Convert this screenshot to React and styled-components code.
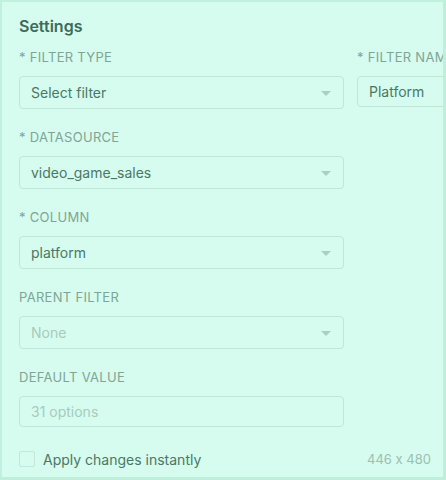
import React from 'react'
import styled, { createGlobalStyle } from 'styled-components'

const GlobalStyle = createGlobalStyle`
  html, body {
    margin: 0;
    padding: 0;
    background: #d6fcef;
  }
  body {
    font-family: Inter, "Noto Sans", sans-serif;
    font-feature-settings: "calt" 0;
    -webkit-font-smoothing: antialiased;
  }
`

const Frame = styled.div`
  position: relative;
  width: 446px;
  height: 480px;
  box-sizing: border-box;
  overflow: hidden;
  background: #d6fcef;
  border-top: 2px solid #c2f0de;
  border-left: 2px solid #c2f0de;
  border-right: 3px solid #bfeedc;
  border-bottom: 3px solid #bfeedc;
  padding: 14px 0 0 17px;
`

const Title = styled.h2`
  margin: 0 0 11px;
  font-size: 16px;
  line-height: 20px;
  font-weight: 600;
  color: #3c6b59;
`

const Grid = styled.div`
  display: grid;
  grid-template-columns: 325px 325px;
  column-gap: 13px;
  width: 700px;
`

const Column = styled.div`
  display: flex;
  flex-direction: column;
`

const Field = styled.div`
  display: flex;
  flex-direction: column;
  margin-bottom: 18px;
`

const Label = styled.div`
  font-size: 13px;
  line-height: 20px;
  letter-spacing: 0.3px;
  color: #7ea595;
  text-transform: uppercase;
  margin-bottom: 9px;
  white-space: nowrap;
`

const Box = styled.div`
  box-sizing: border-box;
  height: ${p => (p.$input ? '31px' : '33px')};
  border: 1px solid #bfe6d6;
  border-radius: 4px;
  display: flex;
  align-items: center;
  justify-content: space-between;
  padding: 0 12px 0 11px;
  font-size: 14px;
  color: ${p => (p.$disabled ? '#a7cbbc' : '#4a7866')};
  margin-bottom: ${p => (p.$input ? '2px' : '0')};
`

const Caret = styled.svg`
  width: 10px;
  height: 6px;
  fill: #a8cfbf;
  margin-top: 2px;
`

const Footer = styled.div`
  display: flex;
  align-items: center;
  justify-content: space-between;
  width: 412px;
  height: 30px;
  margin-top: -3px;
`

const CheckRow = styled.label`
  display: flex;
  align-items: center;
  gap: 8px;
  font-size: 14px;
  color: #4a7866;
`

const CheckBox = styled.span`
  display: inline-block;
  box-sizing: border-box;
  width: 16px;
  height: 16px;
  border: 1px solid #c3e7d8;
  border-radius: 2px;
`

const Size = styled.span`
  font-size: 13px;
  color: #9dbfb1;
`

const Select = ({ value, disabled }) => (
  <Box $disabled={disabled}>
    <span>{value}</span>
    <Caret viewBox="0 0 10 6">
      <polygon points="0,0 10,0 5,5" />
    </Caret>
  </Box>
)

const fields = [
  { label: '* Filter Type', value: 'Select filter' },
  { label: '* Datasource', value: 'video_game_sales' },
  { label: '* Column', value: 'platform' },
  { label: 'Parent Filter', value: 'None', disabled: true },
]

export default function App() {
  return (
    <>
      <GlobalStyle />
      <Frame>
        <Title>Settings</Title>
        <Grid>
          <Column>
            {fields.map(f => (
              <Field key={f.label}>
                <Label>{f.label}</Label>
                <Select value={f.value} disabled={f.disabled} />
              </Field>
            ))}
            <Field>
              <Label>Default Value</Label>
              <Box $input $disabled>31 options</Box>
            </Field>
          </Column>
          <Column>
            <Field>
              <Label>* Filter Name</Label>
              <Box $input>Platform</Box>
            </Field>
          </Column>
        </Grid>
        <Footer>
          <CheckRow>
            <CheckBox />
            Apply changes instantly
          </CheckRow>
          <Size>446 x 480</Size>
        </Footer>
      </Frame>
    </>
  )
}
